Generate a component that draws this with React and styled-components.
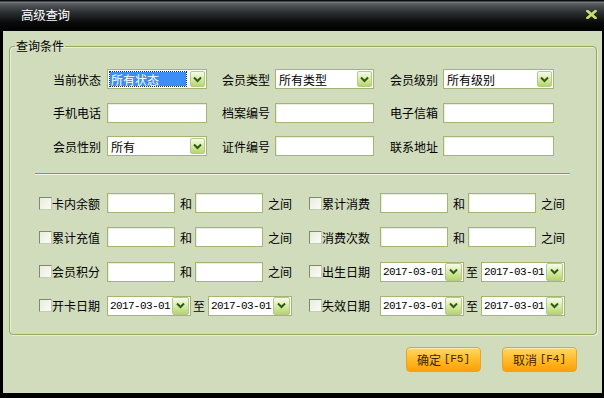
import styled, { createGlobalStyle } from 'styled-components';

const GlobalStyle = createGlobalStyle`
  html, body {
    margin: 0;
    padding: 0;
    background: #000;
  }
  * {
    box-sizing: border-box;
  }
`;

const CJK = `"Noto Sans CJK SC", "Noto Sans", sans-serif`;
const MONO = `"Liberation Mono", "DejaVu Sans Mono", monospace`;

const topRows = [
  [
    { label: '当前状态', kind: 'combo', value: '所有状态', selected: true },
    { label: '会员类型', kind: 'combo', value: '所有类型' },
    { label: '会员级别', kind: 'combo', value: '所有级别' },
  ],
  [
    { label: '手机电话', kind: 'text' },
    { label: '档案编号', kind: 'text' },
    { label: '电子信箱', kind: 'text' },
  ],
  [
    { label: '会员性别', kind: 'combo', value: '所有' },
    { label: '证件编号', kind: 'text' },
    { label: '联系地址', kind: 'text' },
  ],
];

const rangeRows = [
  [
    { label: '卡内余额', kind: 'range' },
    { label: '累计消费', kind: 'range' },
  ],
  [
    { label: '累计充值', kind: 'range' },
    { label: '消费次数', kind: 'range' },
  ],
  [
    { label: '会员积分', kind: 'range' },
    { label: '出生日期', kind: 'date' },
  ],
  [
    { label: '开卡日期', kind: 'date' },
    { label: '失效日期', kind: 'date' },
  ],
];

function Chevron() {
  return (
    <svg width="9" height="7" viewBox="0 0 9 7">
      <path d="M1 1.5 L4.5 5 L8 1.5" fill="none" stroke="#2d5a12" strokeWidth="2" />
    </svg>
  );
}

function Combo({ value, selected, width, mono, buttonWidth }) {
  return (
    <ComboBox $width={width}>
      <ComboText $selected={selected} $mono={mono}>
        {value}
      </ComboText>
      <DropButton $width={buttonWidth}>
        <Chevron />
      </DropButton>
    </ComboBox>
  );
}

function RangeField({ field }) {
  if (field.kind === 'date') {
    return (
      <>
        <Combo value="2017-03-01" width={84} mono buttonWidth={17} />
        <Joiner $left={2} $right={3}>至</Joiner>
        <Combo value="2017-03-01" width={84} mono buttonWidth={17} />
      </>
    );
  }
  return (
    <>
      <TextBox $width={68} />
      <Joiner $left={5} $right={3}>和</Joiner>
      <TextBox $width={68} />
      <Joiner $left={5} $right={0}>之间</Joiner>
    </>
  );
}

export default function App() {
  const comboWidths = [100, 99, 111];

  return (
    <>
      <GlobalStyle />
      <Window>
        <TitleBar>
          <Title>高级查询</Title>
          <CloseButton>
            <svg width="11" height="9" viewBox="0 0 11 9">
              <path d="M1.5 1 L9.5 8 M9.5 1 L1.5 8" stroke="#c9e06a" strokeWidth="2.6" strokeLinecap="square" />
            </svg>
          </CloseButton>
        </TitleBar>
        <Body>
          <Group>
            <GroupTitle>查询条件</GroupTitle>
            <FilterGrid>
              {topRows.map((row) =>
                row.map((field, i) => (
                  <Cell key={field.label}>
                    <FieldLabel $first={i === 0}>{field.label}</FieldLabel>
                    {field.kind === 'combo' ? (
                      <Combo value={field.value} selected={field.selected} width={comboWidths[i]} buttonWidth={15} />
                    ) : (
                      <TextBox $width={comboWidths[i]} />
                    )}
                  </Cell>
                ))
              )}
            </FilterGrid>
            <Divider />
            <RangeGrid>
              {rangeRows.map((row) =>
                row.map((field, i) => (
                  <RangeRow key={field.label}>
                    <CheckBox />
                    <CheckLabel $width={i === 0 ? 55 : 58}>{field.label}</CheckLabel>
                    <RangeField field={field} />
                  </RangeRow>
                ))
              )}
            </RangeGrid>
          </Group>
          <Footer>
            <ActionButton>
              确定 <KeyHint>[F5]</KeyHint>
            </ActionButton>
            <ActionButton>
              取消 <KeyHint>[F4]</KeyHint>
            </ActionButton>
          </Footer>
        </Body>
      </Window>
    </>
  );
}

const Window = styled.div`
  width: 604px;
  height: 398px;
  background: #000;
  display: flex;
  flex-direction: column;
  font-family: ${CJK};
  font-size: 12px;
  color: #111;
`;

const TitleBar = styled.div`
  height: 31px;
  flex: none;
  display: flex;
  align-items: center;
  padding: 0 7px 3px 21px;
  background: linear-gradient(
    to bottom,
    #0c0d0e 0,
    #0c0d0e 1px,
    #7b7f82 2px,
    #55595c 4px,
    #2e3133 12px,
    #0a0b0c 22px,
    #000 31px
  );
`;

const Title = styled.div`
  color: #fff;
  font-size: 12.5px;
  letter-spacing: -0.3px;
`;

const CloseButton = styled.div`
  margin-left: auto;
  margin-top: 1px;
  width: 11px;
  height: 9px;
  display: flex;
`;

const Body = styled.div`
  flex: 1;
  margin: 0 2px 5px 3px;
  background: #d1dcbd;
  display: flex;
  flex-direction: column;
`;

const Group = styled.fieldset`
  margin: 7px 5px 0 6px;
  padding: 0 0 18px 0;
  border: 1px solid #90ab58;
  border-radius: 4px;
  box-shadow: inset 1px 1px 0 rgba(255, 255, 255, 0.5), 1px 1px 0 rgba(255, 255, 255, 0.5);
  min-width: 0;
`;

const GroupTitle = styled.legend`
  margin-left: 5px;
  padding: 0 1px;
  font-size: 12px;
  line-height: 16px;
  color: #000;
`;

const FilterGrid = styled.div`
  margin: 15px 0 0 43px;
  display: grid;
  grid-template-columns: 154px 167px 180px;
  grid-auto-rows: 20px;
  row-gap: 13.5px;
`;

const Cell = styled.div`
  display: flex;
  align-items: center;
  justify-content: flex-end;
`;

const FieldLabel = styled.span`
  margin-right: ${(p) => (p.$first ? 6 : 5)}px;
  white-space: nowrap;
  color: #000;
`;

const TextBox = styled.div`
  width: ${(p) => p.$width}px;
  height: 20px;
  flex: none;
  background: #fff;
  border: 1px solid #a3b473;
  box-shadow: inset 1px 1px 0 #e8eddc;
`;

const ComboBox = styled.div`
  width: ${(p) => p.$width}px;
  height: 20px;
  flex: none;
  display: flex;
  align-items: center;
  padding: 0 1px 0 2px;
  background: #fff;
  border: 1px solid #a3b473;
`;

const ComboText = styled.span`
  flex: 1;
  min-width: 0;
  height: 14px;
  margin-right: ${(p) => (p.$mono ? 1 : 4)}px;
  display: flex;
  align-items: center;
  padding-left: ${(p) => (p.$mono ? 0 : 1)}px;
  white-space: nowrap;
  font-family: ${(p) => (p.$mono ? MONO : CJK)};
  font-size: ${(p) => (p.$mono ? '11px' : '12px')};
  letter-spacing: ${(p) => (p.$mono ? '-0.6px' : '0')};
  color: ${(p) => (p.$selected ? '#fff' : '#000')};
  background: ${(p) => (p.$selected ? '#3a8ef6' : 'transparent')};
  outline: ${(p) => (p.$selected ? '1px dotted #1d2a44' : 'none')};
`;

const DropButton = styled.span`
  width: ${(p) => p.$width}px;
  height: ${(p) => (p.$width > 15 ? 18 : 16)}px;
  flex: none;
  display: flex;
  align-items: center;
  justify-content: center;
  border: 1px solid #b5c98a;
  border-radius: 2px;
  background: linear-gradient(to bottom, #f7fbe9 0%, #dcecb2 45%, #b6d66a 100%);
`;

const Divider = styled.div`
  margin: 17px 0 0 25px;
  width: 535px;
  height: 2px;
  border-top: 1px solid #4f9fcc;
  border-bottom: 1px solid #eef3e4;
`;

const RangeGrid = styled.div`
  margin: 18px 0 0 29px;
  display: grid;
  grid-template-columns: 270px 1fr;
  grid-auto-rows: 20px;
  row-gap: 14.3px;
`;

const RangeRow = styled.div`
  display: flex;
  align-items: center;
`;

const CheckBox = styled.span`
  width: 13px;
  height: 13px;
  flex: none;
  border: 1px solid #7e8a6e;
  border-right-color: #c4ccb4;
  border-bottom-color: #c4ccb4;
  background: linear-gradient(135deg, #e9ecdf 0%, #fbfbf6 100%);
`;

const CheckLabel = styled.span`
  width: ${(p) => p.$width}px;
  flex: none;
  white-space: nowrap;
  color: #000;
`;

const Joiner = styled.span`
  margin: 0 ${(p) => p.$right}px 0 ${(p) => p.$left}px;
  white-space: nowrap;
  color: #000;
`;

const Footer = styled.div`
  display: flex;
  justify-content: flex-end;
  gap: 21px;
  margin-top: 12px;
  padding-right: 25px;
`;

const ActionButton = styled.button`
  width: 75px;
  height: 25px;
  padding: 0;
  display: flex;
  align-items: center;
  justify-content: center;
  gap: 0;
  font-family: ${CJK};
  font-size: 12px;
  color: #3a2500;
  border: 1px solid #eda12a;
  border-radius: 4px;
  background: linear-gradient(to bottom, #ffd86a 0%, #ffbf2e 45%, #ff9f06 100%);
  box-shadow: inset 0 1px 0 rgba(255, 255, 255, 0.45);
  white-space: pre;
`;

const KeyHint = styled.span`
  font-family: ${MONO};
  font-size: 11px;
`;
